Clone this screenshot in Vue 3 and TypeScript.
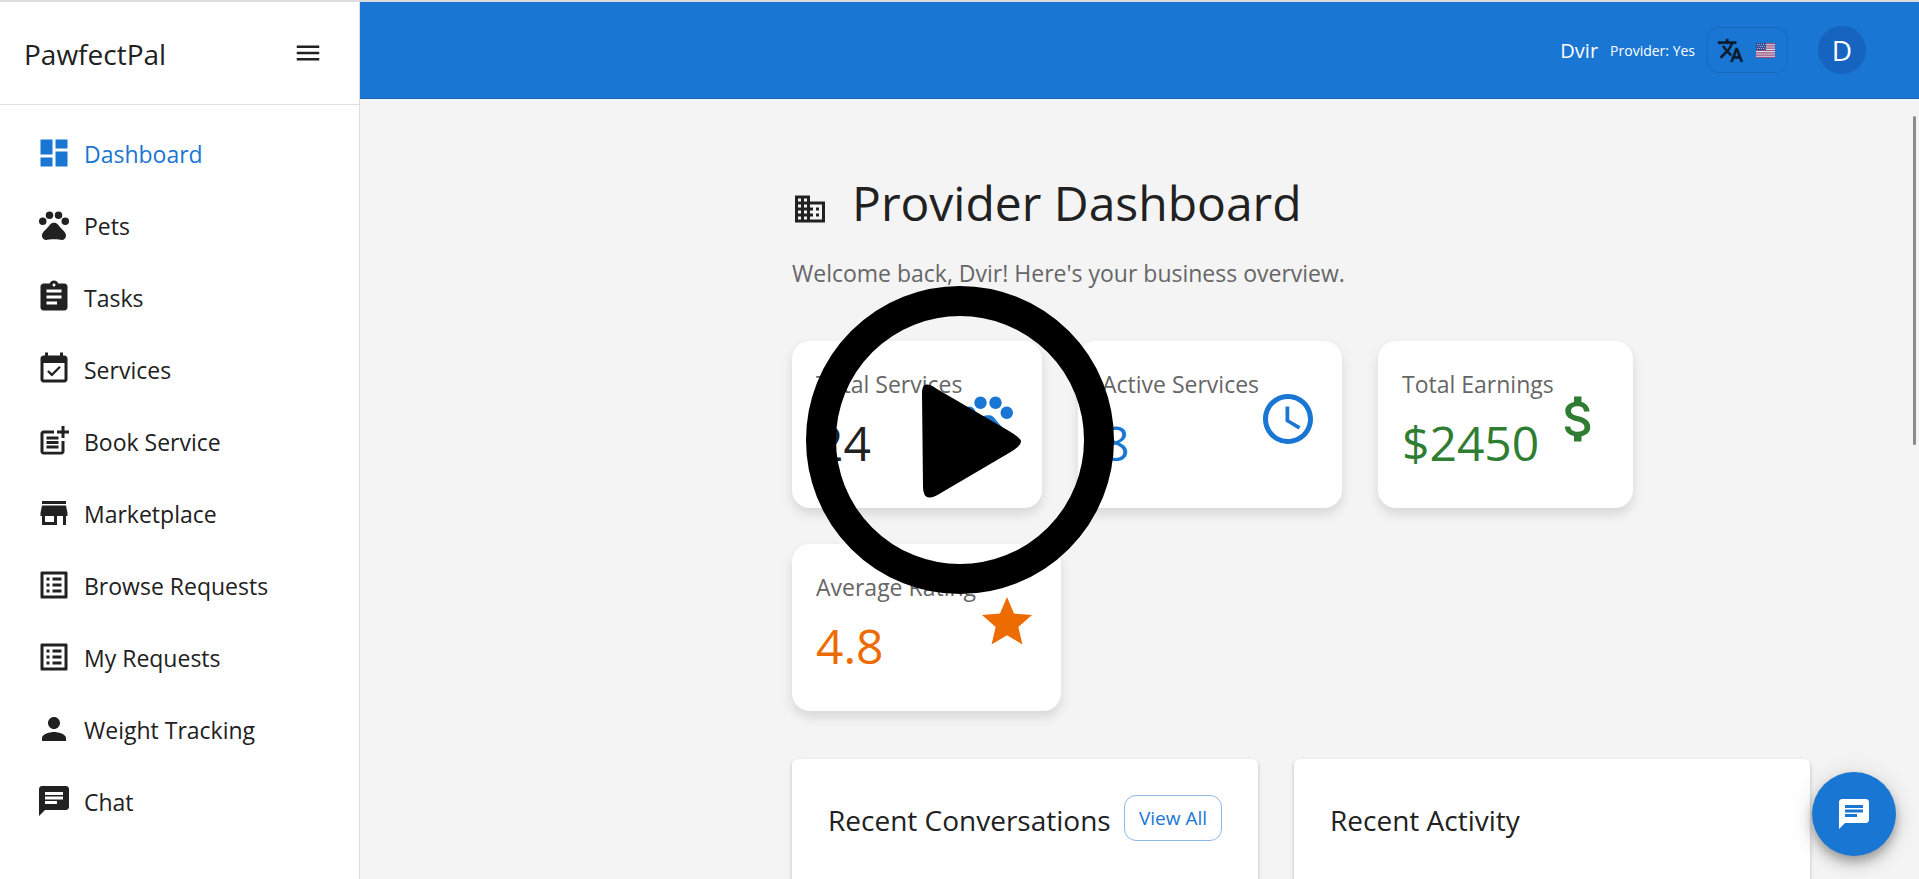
<script setup lang="ts">
interface NavItem {
  label: string
  icon: string
}

interface Stat {
  label: string
  value: string
  icon: string
  valueTone: string
  iconTone: string
}

const paths: Record<string, string> = {
  menu: 'M3 18h18v-2H3zm0-5h18v-2H3zm0-7v2h18V6z',
  dashboard: 'M3 13h8V3H3zm0 8h8v-6H3zm10 0h8V11h-8zm0-18v6h8V3z',
  pets:
    'M4.5 7a2.5 2.5 0 1 0 0 5 2.5 2.5 0 1 0 0-5M9 3a2.5 2.5 0 1 0 0 5 2.5 2.5 0 1 0 0-5M15 3a2.5 2.5 0 1 0 0 5 2.5 2.5 0 1 0 0-5M19.5 7a2.5 2.5 0 1 0 0 5 2.5 2.5 0 1 0 0-5M17.34 14.86c-.87-1.02-1.6-1.89-2.48-2.91-.46-.54-1.05-1.08-1.75-1.32-.11-.04-.22-.07-.33-.09-.25-.04-.52-.04-.78-.04s-.53 0-.79.05c-.11.02-.22.05-.33.09-.7.24-1.28.78-1.75 1.32-.87 1.02-1.6 1.89-2.48 2.91-1.31 1.31-2.92 2.76-2.62 4.79.29 1.02 1.02 2.03 2.33 2.32.73.15 3.06-.44 5.54-.44h.18c2.48 0 4.81.58 5.54.44 1.31-.29 2.04-1.31 2.33-2.32.31-2.04-1.3-3.49-2.61-4.8',
  tasks:
    'M19 3h-4.18C14.4 1.84 13.3 1 12 1s-2.4.84-2.82 2H5c-1.1 0-2 .9-2 2v14c0 1.1.9 2 2 2h14c1.1 0 2-.9 2-2V5c0-1.1-.9-2-2-2m-7 0c.55 0 1 .45 1 1s-.45 1-1 1-1-.45-1-1 .45-1 1-1m2 14H7v-2h7zm3-4H7v-2h10zm0-4H7V7h10z',
  event:
    'M16.53 11.06 15.47 10l-4.88 4.88-2.12-2.12-1.06 1.06L10.59 17zM19 3h-1V1h-2v2H8V1H6v2H5c-1.11 0-1.99.9-1.99 2L3 19c0 1.1.89 2 2 2h14c1.1 0 2-.9 2-2V5c0-1.1-.9-2-2-2m0 16H5V8h14z',
  postAdd:
    'M17 19.22H5V7h7V5H5c-1.1 0-2 .9-2 2v12c0 1.1.9 2 2 2h12c1.1 0 2-.9 2-2v-7h-2zM19 2h-2v3h-3v2h3v2.99h2V7h3V5h-3zM7 9h8v2H7zM7 12v2h8v-2zM7 15h8v2H7z',
  store: 'M20 4H4v2h16zm1 10v-2l-1-5H4l-1 5v2h1v6h10v-6h4v6h2v-6zm-9 4H6v-4h6z',
  list: 'M19 5v14H5V5zm1.1-2H3.9c-.5 0-.9.4-.9.9v16.2c0 .4.4.9.9.9h16.2c.4 0 .9-.5.9-.9V3.9c0-.5-.5-.9-.9-.9M11 7h6v2h-6zm0 4h6v2h-6zm0 4h6v2h-6zM7 7h2v2H7zm0 4h2v2H7zm0 4h2v2H7z',
  person:
    'M12 12c2.21 0 4-1.79 4-4s-1.79-4-4-4-4 1.79-4 4 1.79 4 4 4m0 2c-2.67 0-8 1.34-8 4v2h16v-2c0-2.66-5.33-4-8-4',
  chat: 'M20 2H4c-1.1 0-1.99.9-1.99 2L2 22l4-4h14c1.1 0 2-.9 2-2V4c0-1.1-.9-2-2-2M6 9h12v2H6zm8 5H6v-2h8zm4-6H6V6h12z',
  translate:
    'm12.87 15.07-2.54-2.51.03-.03c1.74-1.94 2.98-4.17 3.71-6.53H17V4h-7V2H8v2H1v1.99h11.17C11.5 7.92 10.44 9.75 9 11.35 8.07 10.32 7.3 9.19 6.69 8h-2c.73 1.63 1.73 3.17 2.98 4.56l-5.09 5.02L4 19l5-5 3.11 3.11zM18.5 10h-2L12 22h2l1.12-3h4.75L21 22h2zm-2.62 7 1.62-4.33L19.12 17z',
  business:
    'M12 7V3H2v18h20V7zM6 19H4v-2h2zm0-4H4v-2h2zm0-4H4V9h2zm0-4H4V5h2zm4 12H8v-2h2zm0-4H8v-2h2zm0-4H8V9h2zm0-4H8V5h2zm10 12h-8v-2h2v-2h-2v-2h2v-2h-2V9h8zm-2-8h-2v2h2zm0 4h-2v2h2z',
  clock:
    'M11.99 2C6.47 2 2 6.48 2 12s4.47 10 9.99 10C17.52 22 22 17.52 22 12S17.52 2 11.99 2M12 20c-4.42 0-8-3.58-8-8s3.58-8 8-8 8 3.58 8 8-3.58 8-8 8m.5-13H11v6l5.25 3.15.75-1.23-4.5-2.67z',
  dollar:
    'M11.8 10.9c-2.27-.59-3-1.2-3-2.15 0-1.09 1.01-1.85 2.7-1.85 1.78 0 2.44.85 2.5 2.1h2.21c-.07-1.72-1.12-3.3-3.21-3.81V3h-3v2.16c-1.94.42-3.5 1.68-3.5 3.61 0 2.31 1.91 3.46 4.7 4.13 2.5.6 3 1.48 3 2.41 0 .69-.49 1.79-2.7 1.79-2.06 0-2.87-.92-2.98-2.1h-2.2c.12 2.19 1.76 3.42 3.68 3.83V21h3v-2.15c1.95-.37 3.5-1.5 3.5-3.55 0-2.84-2.43-3.81-4.7-4.4',
  star: 'M12 17.27 18.18 21l-1.64-7.03L22 9.24l-7.19-.61L12 2 9.19 8.63 2 9.24l5.46 4.73L5.82 21z',
}

const nav: NavItem[] = [
  { label: 'Dashboard', icon: 'dashboard' },
  { label: 'Pets', icon: 'pets' },
  { label: 'Tasks', icon: 'tasks' },
  { label: 'Services', icon: 'event' },
  { label: 'Book Service', icon: 'postAdd' },
  { label: 'Marketplace', icon: 'store' },
  { label: 'Browse Requests', icon: 'list' },
  { label: 'My Requests', icon: 'list' },
  { label: 'Weight Tracking', icon: 'person' },
  { label: 'Chat', icon: 'chat' },
]

const stats: Stat[] = [
  { label: 'Total Services', value: '24', icon: 'pets', valueTone: 'ink', iconTone: 'blue' },
  { label: 'Active Services', value: '8', icon: 'clock', valueTone: 'blue', iconTone: 'blue' },
  { label: 'Total Earnings', value: '$2450', icon: 'dollar', valueTone: 'green', iconTone: 'green' },
  { label: 'Average Rating', value: '4.8', icon: 'star', valueTone: 'orange', iconTone: 'orange' },
]
</script>

<template>
  <div class="app">
    <aside class="sidebar">
      <div class="brand">
        <span class="brand-name">PawfectPal</span>
        <button type="button" class="icon-button" aria-label="Toggle menu">
          <svg class="icon-sm" viewBox="0 0 24 24"><path :d="paths.menu" /></svg>
        </button>
      </div>
      <nav class="nav">
        <a v-for="(item, i) in nav" :key="item.label" href="#" class="nav-item" :class="{ active: i === 0 }">
          <svg class="icon" viewBox="0 0 24 24"><path :d="paths[item.icon]" /></svg>
          <span class="nav-label">{{ item.label }}</span>
        </a>
      </nav>
    </aside>

    <div class="page">
      <header class="topbar">
        <span class="user">Dvir</span>
        <span class="role">Provider: Yes</span>
        <button type="button" class="language" aria-label="Change language">
          <svg class="icon-lang" viewBox="0 0 24 24"><path :d="paths.translate" /></svg>
          <svg class="flag" viewBox="0 0 19 15">
            <rect width="19" height="15" rx="1" fill="#fff" />
            <path
              d="M0 .6h19M0 2.9h19M0 5.2h19M0 7.5h19M0 9.8h19M0 12.1h19M0 14.4h19"
              stroke="#c8405a"
              stroke-width="1.2"
            />
            <rect width="10" height="7" fill="#3f4680" />
            <path
              d="M1 1.5h8.5M2 3.5h8M1 5.5h8.5"
              stroke="#c6cbe2"
              stroke-width="1"
              stroke-dasharray="1 1"
            />
          </svg>
        </button>
        <button type="button" class="avatar" aria-label="Account">D</button>
      </header>

      <main class="content">
        <h1 class="title">
          <svg class="icon" viewBox="0 0 24 24"><path :d="paths.business" /></svg>
          <span>Provider Dashboard</span>
        </h1>
        <p class="welcome">Welcome back, Dvir! Here's your business overview.</p>

        <section class="stats">
          <article v-for="stat in stats" :key="stat.label" class="stat">
            <div class="stat-text">
              <p class="stat-label">{{ stat.label }}</p>
              <p class="stat-value" :class="stat.valueTone">{{ stat.value }}</p>
            </div>
            <svg class="icon-lg" :class="stat.iconTone" viewBox="0 0 24 24">
              <path :d="paths[stat.icon]" />
            </svg>
          </article>
        </section>

        <section class="panels">
          <article class="panel">
            <h2>Recent Conversations</h2>
            <button type="button" class="outlined">View All</button>
          </article>
          <article class="panel">
            <h2>Recent Activity</h2>
          </article>
        </section>
      </main>
    </div>

    <div class="scroll-thumb"></div>

    <button type="button" class="fab" aria-label="Open chat">
      <svg class="icon" viewBox="0 0 24 24"><path :d="paths.chat" /></svg>
    </button>

    <button type="button" class="play" aria-label="Play">
      <svg viewBox="0 0 308 308">
        <circle cx="154" cy="154" r="139" fill="none" stroke="#000" stroke-width="30" />
        <path
          d="M116 108C116 100 118 97 124 99Q127 100 131 103L203 145Q215 152 215 155.5Q215 160 203 167L134 207.5Q127 212 123 211.5Q117 211 117 201Z"
        />
      </svg>
    </button>
  </div>
</template>

<style>
body {
  margin: 0;
  background: #f4f4f4;
}
</style>

<style scoped>
.app {
  position: relative;
  display: flex;
  box-sizing: border-box;
  height: 100vh;
  overflow: hidden;
  border-top: 2px solid #dcdde0;
  background: #f4f4f4;
  color: #212121;
  font-family: 'Segoe UI', 'Open Sans', 'Noto Sans', sans-serif;
  font-size: 23px;
}

button {
  padding: 0;
  border: 0;
  background: none;
  color: inherit;
  font: inherit;
  cursor: pointer;
}

h1,
h2,
p {
  margin: 0;
  font-weight: 400;
}

svg {
  display: block;
  flex: none;
  fill: currentColor;
}

.icon {
  width: 36px;
  height: 36px;
}

.icon-sm {
  width: 30px;
  height: 30px;
}

.icon-lg {
  width: 60px;
  height: 60px;
}

.icon-lang {
  width: 27px;
  height: 27px;
  stroke: currentColor;
  stroke-width: 0.5;
}

.sidebar {
  flex: none;
  box-sizing: border-box;
  width: 360px;
  border-right: 1px solid #dcdcdc;
  background: #fff;
}

.brand {
  display: flex;
  align-items: center;
  justify-content: space-between;
  height: 102px;
  padding: 0 36px 0 24px;
  border-bottom: 1px solid #dedede;
}

.brand-name {
  padding-top: 2px;
  font-size: 28px;
}

.nav {
  display: flex;
  flex-direction: column;
  padding-top: 12px;
}

.nav-item {
  display: flex;
  align-items: center;
  gap: 12px;
  height: 72px;
  padding: 0 36px;
  color: inherit;
  text-decoration: none;
}

.nav-label {
  padding-top: 2px;
}

.active,
.blue {
  color: #1976d2;
}

.ink {
  color: #212121;
}

.green {
  color: #2e7d32;
}

.orange {
  color: #ed6c02;
}

.page {
  flex: 1;
  min-width: 0;
}

.topbar {
  display: flex;
  align-items: center;
  justify-content: flex-end;
  box-sizing: border-box;
  height: 97px;
  padding-right: 53px;
  border-bottom: 1px solid #1767b6;
  background: #1976d2;
  color: #fff;
}

.user {
  margin-right: 12px;
  font-size: 20px;
}

.role {
  margin-right: 12px;
  font-size: 14px;
}

.language {
  display: flex;
  align-items: center;
  gap: 12px;
  box-sizing: border-box;
  width: 81px;
  height: 46px;
  margin-right: 30px;
  padding-left: 9px;
  border: 1px solid #1869bb;
  border-radius: 12px;
  color: #0a1b2c;
}

.flag {
  width: 19px;
  height: 15px;
  opacity: 0.8;
}

.avatar {
  width: 48px;
  height: 48px;
  border-radius: 50%;
  background: #1565c0;
  font-size: 28px;
  line-height: 48px;
}

.content {
  padding: 72px 109px 0 432px;
}

.title {
  display: flex;
  align-items: flex-end;
  gap: 24px;
  padding: 14px 0 16px;
  font-size: 48px;
  line-height: 36px;
}

.title span {
  padding-bottom: 6px;
}

.welcome {
  margin-top: 12px;
  color: #666;
  line-height: 36px;
}

.stats {
  display: flex;
  flex-wrap: wrap;
  gap: 36px;
  margin-top: 50px;
}

.stat {
  display: flex;
  align-items: center;
  justify-content: space-between;
  box-sizing: border-box;
  width: 250px;
  padding: 24px 24px 36px;
  border-radius: 18px;
  background: #fff;
  box-shadow: 0 6px 12px rgba(0, 0, 0, 0.12);
}

.stat:nth-child(2) {
  width: 264px;
}

.stat:nth-child(3) {
  width: 255px;
}

.stat:nth-child(4) {
  width: 269px;
}

.stat-text {
  min-width: 0;
}

.stat-label {
  color: #666;
  line-height: 38px;
  white-space: nowrap;
}

.stat-value {
  margin-top: 10px;
  font-size: 48px;
  line-height: 59px;
}

.panels {
  display: grid;
  grid-template-columns: 466fr 516fr;
  gap: 36px;
  margin-top: 48px;
}

.panel {
  display: flex;
  align-items: flex-start;
  justify-content: space-between;
  min-height: 240px;
  padding: 36px;
  border-radius: 6px;
  background: #fff;
  box-shadow: 0 2px 4px rgba(0, 0, 0, 0.22);
}

.panel h2 {
  font-size: 28px;
  line-height: 50px;
  white-space: nowrap;
}

.outlined {
  box-sizing: border-box;
  width: 98px;
  height: 46px;
  border: 1px solid #8cbae8;
  border-radius: 12px;
  color: #1976d2;
  font-size: 19px;
}

.scroll-thumb {
  position: absolute;
  top: 114px;
  right: 3px;
  width: 3px;
  height: 329px;
  border-radius: 2px;
  background: #8b8b8b;
}

.fab {
  position: absolute;
  right: 23px;
  bottom: 23px;
  display: flex;
  align-items: center;
  justify-content: center;
  width: 84px;
  height: 84px;
  border-radius: 50%;
  background: #1976d2;
  color: #fff;
  box-shadow:
    0 5px 8px rgba(0, 0, 0, 0.2),
    0 9px 15px rgba(0, 0, 0, 0.14),
    0 2px 27px rgba(0, 0, 0, 0.12);
}

.play {
  position: fixed;
  inset: 0;
  width: 308px;
  height: 308px;
  margin: auto;
  color: #000;
}
</style>
